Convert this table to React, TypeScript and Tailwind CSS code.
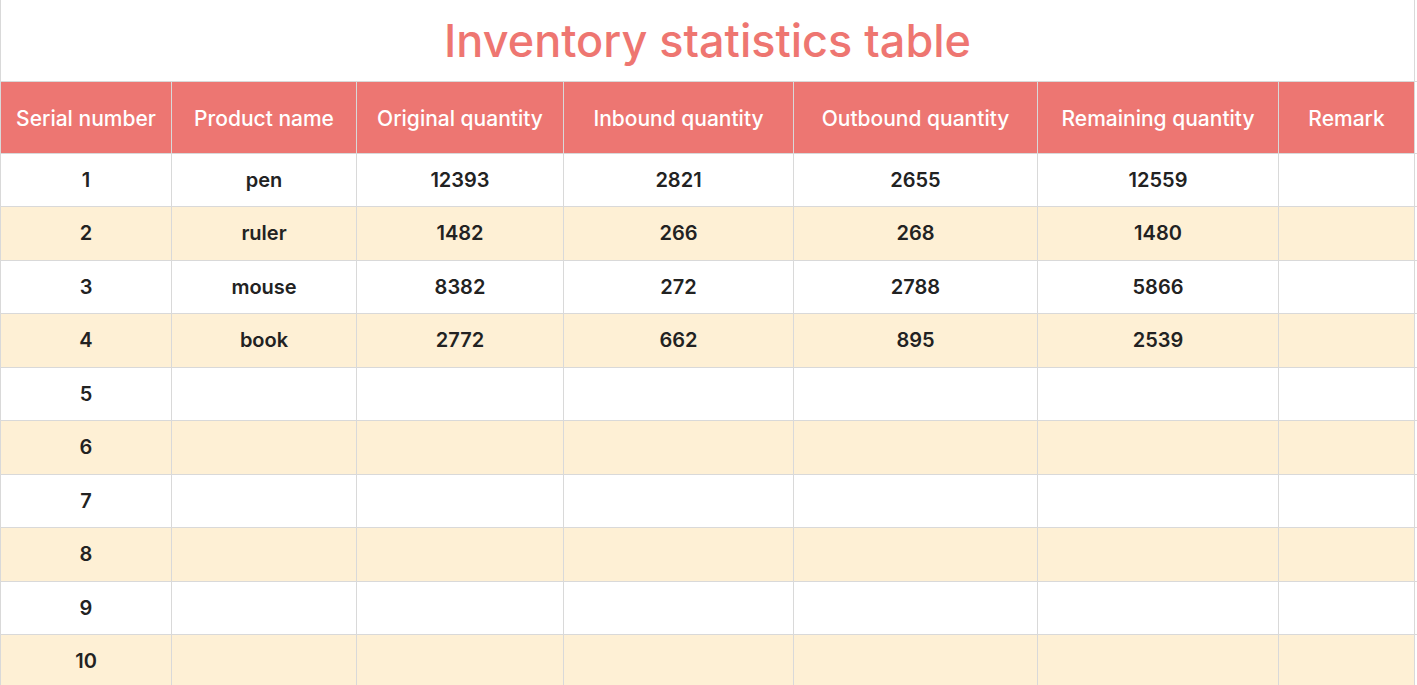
import React from 'react'

const columns = [
  { label: 'Serial number', w: 'w-[171px]' },
  { label: 'Product name', w: 'w-[185px]' },
  { label: 'Original quantity', w: 'w-[207px]' },
  { label: 'Inbound quantity', w: 'w-[230px]' },
  { label: 'Outbound quantity', w: 'w-[244px]' },
  { label: 'Remaining quantity', w: 'w-[241px]' },
  { label: 'Remark', w: 'w-[136px]' },
]

const rows: (string | number)[][] = [
  [1, 'pen', 12393, 2821, 2655, 12559, ''],
  [2, 'ruler', 1482, 266, 268, 1480, ''],
  [3, 'mouse', 8382, 272, 2788, 5866, ''],
  [4, 'book', 2772, 662, 895, 2539, ''],
  [5, '', '', '', '', '', ''],
  [6, '', '', '', '', '', ''],
  [7, '', '', '', '', '', ''],
  [8, '', '', '', '', '', ''],
  [9, '', '', '', '', '', ''],
  [10, '', '', '', '', '', ''],
]

export default function App() {
  return (
    <div className="w-[1417px] h-[685px] overflow-hidden bg-white" style={{ fontFamily: 'Inter, "Noto Sans", sans-serif' }}>
      <table className="table-fixed border-collapse w-[1424px] min-w-[1424px]">
        <colgroup>
          {columns.map((c) => (
            <col key={c.label} className={c.w} />
          ))}
          <col className="w-[10px]" />
        </colgroup>
        <tbody>
          <tr className="h-[81px]">
            <td colSpan={7} className="border border-[#d9d9d9] border-t-0 text-center align-middle">
              <span className="text-[45px] font-medium text-[#ee7671]">Inventory statistics table</span>
            </td>
            <td className="border-b border-[#d9d9d9]" />
          </tr>
          <tr className="h-[72px] bg-[#ed7672]">
            {columns.map((c) => (
              <td key={c.label} className="border border-[#d9d9d9] pt-[3px] text-center text-white text-[21px] font-medium whitespace-nowrap">
                {c.label}
              </td>
            ))}
            <td className="border border-[#d9d9d9] bg-white" />
          </tr>
          {rows.map((r, i) => (
            <tr key={i} className={i % 2 === 1 ? 'h-[53.5px] bg-[#fef0d5]' : 'h-[53.5px] bg-white'}>
              {r.map((v, j) => (
                <td key={j} className="border border-[#d9d9d9] text-center text-[20px] font-semibold text-[#222222]">
                  {v}
                </td>
              ))}
              <td className="border border-[#d9d9d9] bg-white" />
            </tr>
          ))}
        </tbody>
      </table>
    </div>
  )
}
